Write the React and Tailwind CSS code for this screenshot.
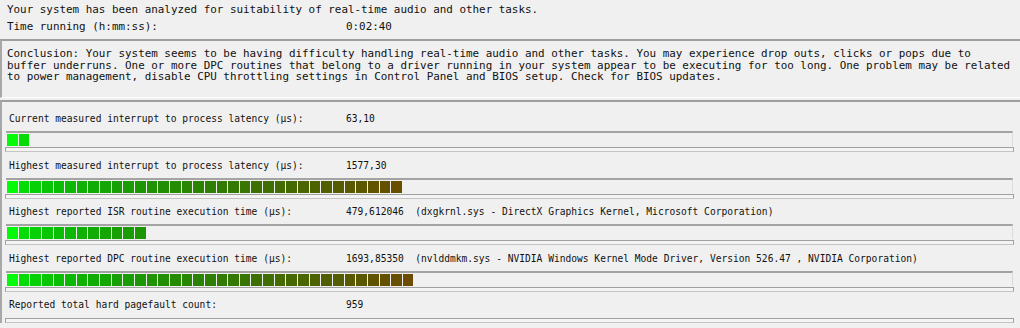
import React from 'react';

const rows = [
  { label: 'Current measured interrupt to process latency (µs):', value: '63,10', segs: 2 },
  { label: 'Highest measured interrupt to process latency (µs):', value: '1577,30', segs: 34 },
  {
    label: 'Highest reported ISR routine execution time (µs):',
    value: '479,612046  (dxgkrnl.sys - DirectX Graphics Kernel, Microsoft Corporation)',
    segs: 12,
  },
  {
    label: 'Highest reported DPC routine execution time (µs):',
    value: '1693,85350  (nvlddmkm.sys - NVIDIA Windows Kernel Mode Driver, Version 526.47 , NVIDIA Corporation)',
    segs: 35,
  },
  { label: 'Reported total hard pagefault count:', value: '959', segs: null },
];

// colour of segment i, green fading to brown
const segColor = (i) => {
  const t = i / 34;
  const r = Math.round(4 + 104 * Math.pow(t, 1.3));
  const g = Math.round(250 - 174 * Math.sqrt(t));
  const b = Math.round(6 * (1 - t));
  return `rgb(${r},${g},${b})`;
};

const Meter = ({ segs }) => (
  <div className="ml-[4px] mr-[5px] h-[15px] border-t-2 border-t-[#a3a3a3] border-r border-r-[#dcdcdc] flex items-start gap-[1px] pl-[1px] pt-[1px]">
    {Array.from({ length: segs }).map((_, i) => (
      <div key={i} className="w-[10.65px] h-[12px] shrink-0" style={{ background: segColor(i) }} />
    ))}
  </div>
);

const Thin = () => (
  <div className="ml-[3px] mr-[4px] mt-[1px] h-[5px] border border-[#a0a0a0] border-b-[#c4c4c4] bg-[#f4f4f4]" />
);

const Row = ({ row }) => (
  <div className="flex flex-col">
    <div className="h-[25px] flex items-center pl-[7px] pt-[1px] text-[9.6px]">
      <span className="w-[337px] shrink-0 whitespace-pre">{row.label}</span>
      <span className="whitespace-pre">{row.value}</span>
    </div>
    {row.segs !== null && <Meter segs={row.segs} />}
    <Thin />
  </div>
);

export default function App() {
  return (
    <div
      className="w-[1020px] h-[328px] overflow-hidden bg-[#f0f0f0] text-[#111] text-[10.9px] leading-[12px]"
      style={{ fontFamily: '"DejaVu Sans Mono", "Liberation Mono", monospace' }}
    >
      <div className="pl-[7px] pt-[3px] h-[39px] flex flex-col">
        <div className="h-[13px] flex items-center whitespace-pre">
          Your system has been analyzed for suitability of real-time audio and other tasks.
        </div>
        <div className="h-[22px] flex items-center">
          <span className="w-[339px] shrink-0 whitespace-pre">Time running (h:mm:ss):</span>
          <span>0:02:40</span>
        </div>
      </div>

      <div className="h-[59px] border-t-2 border-t-[#9e9e9e] border-l-2 border-l-[#a8a8a8] border-b border-b-white pl-[5px] pt-[7px] leading-[11.5px]">
        <p className="whitespace-pre">
          Conclusion: Your system seems to be having difficulty handling real-time audio and other tasks. You may experience drop outs, clicks or pops due to
        </p>
        <p className="whitespace-pre">
          buffer underruns. One or more DPC routines that belong to a driver running in your system appear to be executing for too long. One problem may be related
        </p>
        <p className="whitespace-pre">
          to power management, disable CPU throttling settings in Control Panel and BIOS setup. Check for BIOS updates.
        </p>
      </div>

      <div className="mt-[2px] border-t-2 border-t-[#9e9e9e] border-l-2 border-l-[#a8a8a8] pt-[4px] flex flex-col gap-[0.5px] pr-[2px]">
        {rows.map((r) => (
          <Row key={r.label} row={r} />
        ))}
      </div>
    </div>
  );
}
